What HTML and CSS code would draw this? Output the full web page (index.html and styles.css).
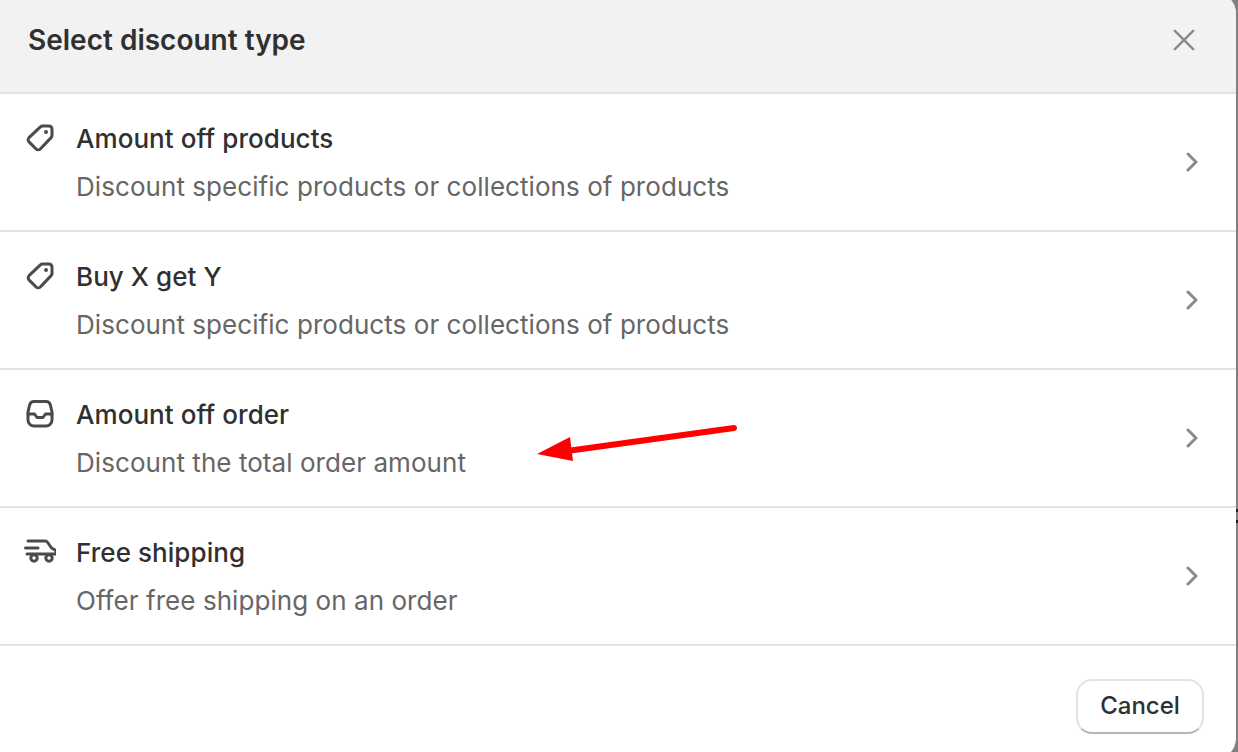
FILE: index.html
```html
<!DOCTYPE html>
<html lang="en">
<head>
<meta charset="utf-8">
<title>Select discount type</title>
<link rel="stylesheet" href="styles.css">
</head>
<body>
<div class="modal">
  <header class="head">
    <h1 class="title">Select discount type</h1>
    <svg class="close" viewBox="0 0 24 24"><path d="M2 2 22 22M22 2 2 22"/></svg>
  </header>
  <div class="row">
    <svg class="icon" viewBox="0 0 28 28"><path d="M16.500 2h6.500a3 3 0 0 1 3 3v6.500a3 3 0 0 1-.9 2.100L14.300 25a3 3 0 0 1-4.200 0l-7.100-7.100a3 3 0 0 1 0-4.200L14.400 2.900a3 3 0 0 1 2.100-.9Z"/><circle class="dot" cx="20" cy="8" r="2"/></svg>
    <div class="text"><div class="name">Amount off products</div><div class="desc">Discount specific products or collections of products</div></div>
    <svg class="chev" viewBox="0 0 12 20"><path d="M2 2 10 10 2 18"/></svg>
  </div>
  <div class="row">
    <svg class="icon" viewBox="0 0 28 28"><path d="M16.500 2h6.500a3 3 0 0 1 3 3v6.500a3 3 0 0 1-.9 2.100L14.300 25a3 3 0 0 1-4.200 0l-7.100-7.100a3 3 0 0 1 0-4.200L14.400 2.900a3 3 0 0 1 2.100-.9Z"/><circle class="dot" cx="20" cy="8" r="2"/></svg>
    <div class="text"><div class="name">Buy X get Y</div><div class="desc">Discount specific products or collections of products</div></div>
    <svg class="chev" viewBox="0 0 12 20"><path d="M2 2 10 10 2 18"/></svg>
  </div>
  <div class="row">
    <svg class="icon" viewBox="0 0 28 28"><path d="M8 1.500h12a4.500 4.500 0 0 1 4.300 3.200L26 12v8a6 6 0 0 1-6 6H8a6 6 0 0 1-6-6v-8l1.700-7.300A4.500 4.500 0 0 1 8 1.500Z"/><path d="M2 14h6.500l2.500 3.500h6l2.500-3.500H26"/></svg>
    <div class="text"><div class="name">Amount off order</div><div class="desc">Discount the total order amount</div></div>
    <svg class="chev" viewBox="0 0 12 20"><path d="M2 2 10 10 2 18"/></svg>
  </div>
  <div class="row">
    <svg class="icon icon-truck" viewBox="0 0 32 28"><path d="M4 5h17c1.200 0 2 .5 2.700 1.500L27.500 12l3.500 2c.8.500 1 1.200 1 2v2H3"/><path d="M1.500 12H14"/><circle class="wheel" cx="10" cy="22" r="3.200"/><circle class="wheel" cx="25" cy="22" r="3.200"/></svg>
    <div class="text"><div class="name">Free shipping</div><div class="desc">Offer free shipping on an order</div></div>
    <svg class="chev" viewBox="0 0 12 20"><path d="M2 2 10 10 2 18"/></svg>
  </div>
  <footer class="foot"><button class="cancel" type="button">Cancel</button></footer>
</div>
<svg class="arrow" viewBox="0 0 220 50"><path class="shaft" d="M197 7 30 30"/><path class="tip" d="M0 33 33 16 36 40Z"/></svg>
<span class="tick tick-a"></span>
<span class="tick tick-b"></span>
</body>
</html>
```
FILE: styles.css
```css
* { box-sizing: border-box; }
html, body { margin: 0; height: 100%; }
body {
  position: relative;
  height: 752px;
  overflow: hidden;
  background: #808080;
  font-family: Inter, "Liberation Sans", sans-serif;
  color: #303030;
}
.modal {
  width: 1242px;
  height: 768px;
  margin: -8px 0 0 -6px;
  background: #fff;
  border-radius: 22px;
  overflow: hidden;
}
.head {
  display: flex;
  align-items: center;
  justify-content: space-between;
  height: 102px;
  padding: 0 41px 4px 34px;
  background: #f2f2f2;
  border-bottom: 2px solid #e3e3e3;
}
.title { margin: 0; font-size: 28px; font-weight: 600; line-height: 36px; }
.close { width: 22px; height: 22px; fill: none; stroke: #8a8a8a; stroke-width: 2.7; stroke-linecap: round; }
.row {
  display: flex;
  align-items: flex-start;
  height: 138px;
  padding: 26px 38px 0 32px;
  border-bottom: 2px solid #e3e3e3;
}
.icon { flex: none; width: 28px; height: 28px; margin-top: 4px; fill: none; stroke: #4a4a4a; stroke-width: 3; stroke-linecap: round; stroke-linejoin: round; }
.icon .dot { fill: #4a4a4a; stroke: none; }
.icon .wheel { fill: #fff; }
.icon-truck { width: 32px; margin: 2px -2px 0 -2px; }
.text { flex: 1; margin-left: 22px; padding-top: 1px; letter-spacing: 0.06px; }
.name { font-size: 26px; font-weight: 550; line-height: 36px; }
.desc { margin-top: 12px; font-size: 26px; line-height: 36px; color: #666; }
.chev { flex: none; width: 12px; height: 20px; margin-top: 32px; fill: none; stroke: #8a8a8a; stroke-width: 3; stroke-linecap: round; stroke-linejoin: round; }
.foot { display: flex; justify-content: flex-end; padding: 33px 32px 0 0; }
.cancel {
  width: 128px;
  height: 55px;
  padding: 0 0 2px;
  background: #fff;
  border: 2px solid #e3e3e3;
  border-bottom-color: #b5b5b5;
  border-radius: 16px;
  font-family: inherit;
  font-size: 24px;
  font-weight: 550;
  color: #303030;
}
.arrow { position: absolute; left: 537px; top: 421px; width: 220px; height: 50px; }
.shaft { fill: none; stroke: #fe0000; stroke-width: 6; stroke-linecap: round; }
.tip { fill: #fe0000; }
.tick { position: absolute; left: 1236px; width: 2px; height: 3px; background: #222; }
.tick-a { top: 509px; }
.tick-b { top: 520px; }
```
